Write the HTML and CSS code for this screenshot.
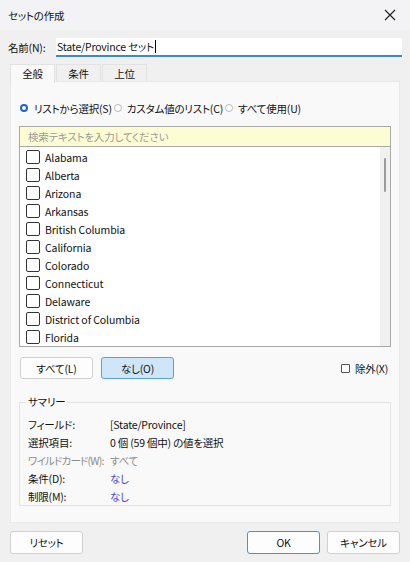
FILE: index.html
```html
<!doctype html>
<html>
<head>
<meta charset="utf-8">
<title>セットの作成</title>
<link rel="stylesheet" href="styles.css">
</head>
<body>
<div class="titlebar">
	<span class="title">セットの作成</span>
	<svg class="close" width="12" height="12" viewBox="0 0 12 12"><path d="M1 1L11 11M11 1L1 11" stroke="#222" stroke-width="1.2"/></svg>
</div>

<div class="namerow">
	<label class="namelabel">名前(N):</label>
	<div class="nameinput">State/Province セット<span class="caret"></span></div>
</div>

<div class="tabs">
	<div class="tab active">全般</div>
	<div class="tab">条件</div>
	<div class="tab">上位</div>
</div>

<div class="panel">
	<div class="radios">
		<span class="radio on"></span><span class="rlabel">リストから選択(S)</span>
		<span class="radio"></span><span class="rlabel">カスタム値のリスト(C)</span>
		<span class="radio"></span><span class="rlabel">すべて使用(U)</span>
	</div>

	<div class="search">検索テキストを入力してください</div>
	<div class="list">
		<div class="items">
			<div class="item"><span class="box"></span>Alabama</div>
			<div class="item"><span class="box"></span>Alberta</div>
			<div class="item"><span class="box"></span>Arizona</div>
			<div class="item"><span class="box"></span>Arkansas</div>
			<div class="item"><span class="box"></span>British Columbia</div>
			<div class="item"><span class="box"></span>California</div>
			<div class="item"><span class="box"></span>Colorado</div>
			<div class="item"><span class="box"></span>Connecticut</div>
			<div class="item"><span class="box"></span>Delaware</div>
			<div class="item"><span class="box"></span>District of Columbia</div>
			<div class="item"><span class="box"></span>Florida</div>
		</div>
		<div class="scrollbar"><span class="thumb"></span></div>
	</div>

	<div class="listbtns">
		<button class="btn">すべて(L)</button>
		<button class="btn pressed">なし(O)</button>
		<span class="exclude"><span class="smallbox"></span>除外(X)</span>
	</div>

	<fieldset class="summary">
		<legend>サマリー</legend>
		<div class="srow"><span class="skey">フィールド:</span><span>[State/Province]</span></div>
		<div class="srow"><span class="skey">選択項目:</span><span>0 個 (59 個中) の値を選択</span></div>
		<div class="srow dim"><span class="skey">ワイルドカード(W):</span><span>すべて</span></div>
		<div class="srow"><span class="skey">条件(D):</span><span class="link">なし</span></div>
		<div class="srow"><span class="skey">制限(M):</span><span class="link">なし</span></div>
	</fieldset>
</div>

<div class="footer">
	<button class="btn wide">リセット</button>
	<span class="spacer"></span>
	<button class="btn wide default">OK</button>
	<button class="btn wide">キャンセル</button>
</div>
</body>
</html>
```

FILE: styles.css
```css
body {
	margin: 0;
	width: 410px;
	height: 562px;
	background: #f0f0f0;
	font-family: "Noto Sans CJK JP", "Noto Sans", sans-serif;
	font-feature-settings: "palt";
	font-size: 10.5px;
	letter-spacing: -0.2px;
	color: #111;
	overflow: hidden;
	white-space: nowrap;
}
.titlebar {
	height: 30px;
	background: #f3f3f6;
	display: flex;
	align-items: center;
	justify-content: space-between;
	padding: 0 10px 0 8px;
}
.close {
	margin-right: 4px;
}
.namerow {
	display: flex;
	align-items: center;
	margin: 8px 8px 0 8px;
}
.namelabel {
	width: 48px;
}
.nameinput {
	flex: 1;
	height: 17px;
	line-height: 17px;
	background: #fff;
	border-bottom: 2px solid #3b88cf;
	padding-left: 1px;
	font-size: 10.5px;
}
.caret {
	display: inline-block;
	width: 1px;
	height: 13px;
	background: #000;
	vertical-align: -2px;
	margin-left: 1px;
}
.tabs {
	display: flex;
	margin: 7px 10px 0 10px;
	height: 17px;
}
.tab {
	width: 43px;
	text-align: center;
	line-height: 17px;
	background: #f0f0f0;
	border: 1px solid #e2e2e2;
	border-bottom: none;
	margin-right: 1px;
}
.tab.active {
	background: #f9f9f9;
	height: 18px;
}
.panel {
	margin: 0 10px;
	height: 442px;
	box-sizing: border-box;
	background: #f9f9f9;
	border: 1px solid #e8e8e8;
	padding: 18px 8px 0 8px;
}
.radios {
	display: flex;
	align-items: center;
	height: 16px;
}
.radio {
	width: 8px;
	height: 8px;
	border-radius: 50%;
	border: 1px solid #b8b8b8;
	background: #fff;
	box-sizing: border-box;
	margin: 0 5px 0 2px;
}
.radio.on {
	border: 2.5px solid #1c64c8;
	margin-left: 1px;
	margin-right: 6px;
}
.search {
	margin-top: 10px;
	height: 21px;
	box-sizing: border-box;
	border: 1px solid #a9a9a9;
	background: #fdfdd3;
	color: #9a9a9a;
	padding-left: 8px;
	line-height: 19px;
}
.list {
	display: flex;
	height: 200px;
	box-sizing: border-box;
	background: #fff;
	border: 1px solid #a9a9a9;
	border-top: none;
}
.items {
	flex: 1;
	padding-top: 1px;
	font-size: 10.5px;
	letter-spacing: -0.1px;
}
.item {
	display: flex;
	align-items: center;
	height: 18px;
}
.box {
	width: 14px;
	height: 14px;
	box-sizing: border-box;
	border: 1px solid #333;
	border-radius: 2px;
	margin: 0 5px 0 6px;
}
.scrollbar {
	width: 10px;
	background: #f0f0f0;
	display: flex;
	justify-content: center;
}
.thumb {
	width: 2px;
	height: 34px;
	background: #9c9c9c;
	margin-top: 11px;
	border-radius: 1px;
}
.listbtns {
	display: flex;
	align-items: center;
	margin-top: 10px;
	padding-left: 1px;
}
.btn {
	font: inherit;
	font-feature-settings: "palt";
	letter-spacing: inherit;
	color: #111;
	width: 73px;
	height: 22px;
	background: #fdfdfd;
	border: 1px solid #d0d0d0;
	border-radius: 3px;
	margin-right: 8px;
	padding: 0;
}
.btn.pressed {
	background: #cfe5f8;
	border-color: #5aa0dc;
}
.exclude {
	margin-left: auto;
	display: flex;
	align-items: center;
	margin-right: 3px;
}
.smallbox {
	width: 9px;
	height: 9px;
	box-sizing: border-box;
	border: 1px solid #555;
	border-radius: 1px;
	margin-right: 5px;
	background: #fff;
}
.summary {
	margin: 16px 0 0 0;
	border: 1px solid #e2e2e2;
	padding: 6px 8px 0 8px;
	height: 111px;
	box-sizing: border-box;
}
legend {
	padding: 0 2px;
	margin-left: -2px;
	line-height: 14px;
}
.srow {
	display: flex;
	height: 18px;
	align-items: center;
}
.skey {
	width: 82px;
}
.dim {
	color: #8c8c8c;
}
.dim .skey {
	letter-spacing: -0.8px;
}
.link {
	color: #4646d8;
}
.footer {
	display: flex;
	margin: 8px 10px 0 10px;
}
.spacer {
	flex: 1;
}
.btn.wide {
	height: 23px;
	margin-right: 0;
}
.btn.default {
	border-color: #4a90d8;
	margin-right: 7px;
}
```
